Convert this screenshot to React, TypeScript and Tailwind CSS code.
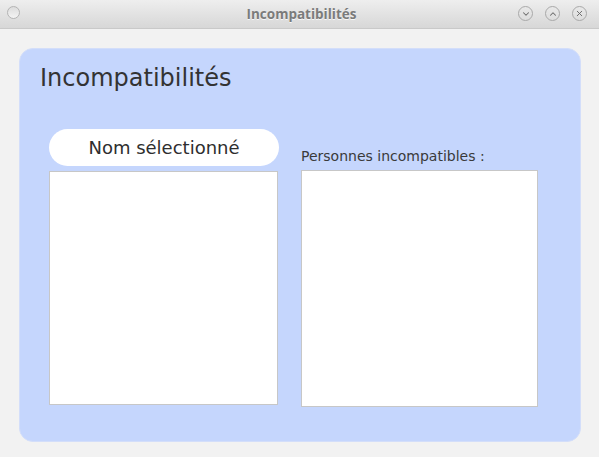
import { ChevronDown, ChevronUp, X } from "lucide-react";

function WinButton({ children }: { children: React.ReactNode }) {
  return (
    <div className="flex h-[15px] w-[15px] items-center justify-center rounded-full border border-[#a9a9a9] text-[#6a6a6a]">
      {children}
    </div>
  );
}

export default function App() {
  return (
    <div className="flex h-[457px] w-[599px] flex-col bg-[#f2f2f2] font-['DejaVu_Sans',sans-serif]">
      <header className="relative flex h-[29px] shrink-0 items-center justify-center border-b border-[#c9c9c9] bg-gradient-to-b from-[#eeeeee] to-[#d7d7d7]">
        <div className="absolute left-[7px] top-[6px] h-[13px] w-[13px] rounded-full border border-[#b4b4b4] bg-gradient-to-b from-[#dcdcdc] to-[#f4f4f4]" />
        <span className="ml-[4px] font-['Open_Sans',sans-serif] text-[13.5px] font-bold text-[#7b7b7b] [text-shadow:0_1px_0_#f6f6f6]">
          Incompatibilités
        </span>
        <div className="absolute right-[12px] top-[6px] flex gap-[12px]">
          <WinButton>
            <ChevronDown size={10} strokeWidth={2.5} />
          </WinButton>
          <WinButton>
            <ChevronUp size={10} strokeWidth={2.5} />
          </WinButton>
          <WinButton>
            <X size={9} strokeWidth={2.5} />
          </WinButton>
        </div>
      </header>

      <main className="ml-[19px] mt-[19px] h-[394px] w-[562px] rounded-[14px] border border-[#d3defa] bg-[#c5d6fd] pl-[20px] pt-[17px]">
        <h1 className="text-[24px] leading-none text-[#333333]">Incompatibilités</h1>

        <div className="ml-[9px] mt-[39px] flex items-start gap-[22px]">
          <section className="flex flex-col">
            <div className="flex h-[37px] w-[230px] items-center justify-center rounded-full bg-white text-[18px] leading-none text-[#2e2e2e]">
              Nom sélectionné
            </div>
            <div className="mt-[5px] h-[234px] w-[229px] border border-[#c7c7c7] bg-white" />
          </section>

          <section className="flex flex-col pt-[20px]">
            <label className="text-[14px] leading-none text-[#3a3a3a]">Personnes incompatibles :</label>
            <div className="mt-[7px] h-[237px] w-[237px] border border-[#c7c7c7] bg-white" />
          </section>
        </div>
      </main>
    </div>
  );
}
